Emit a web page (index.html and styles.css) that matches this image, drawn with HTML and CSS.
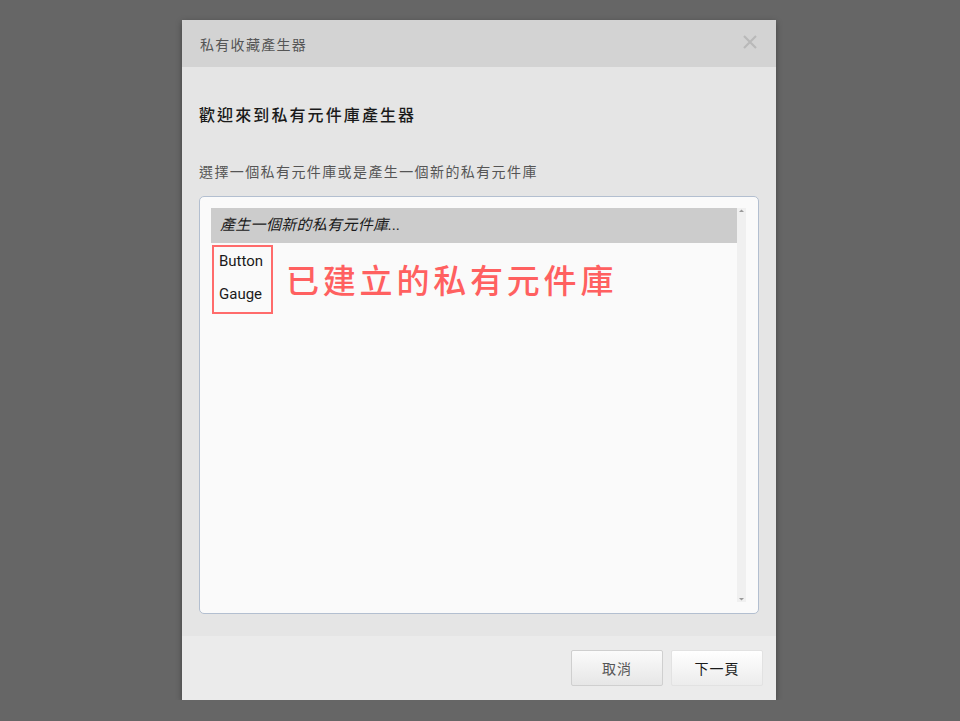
FILE: index.html
```html
<!DOCTYPE html>
<html lang="zh-Hant">
<head>
<meta charset="utf-8">
<title>私有收藏產生器</title>
<link rel="stylesheet" href="styles.css">
</head>
<body>
<div class="dialog">
  <div class="header">
    <span class="title">私有收藏產生器</span>
    <svg class="close" width="16" height="16" viewBox="0 0 16 16"><path d="M2 2L14 14M14 2L2 14" stroke="#b9b9b9" stroke-width="2.2" fill="none"/></svg>
  </div>
  <div class="body">
    <h1 class="heading">歡迎來到私有元件庫產生器</h1>
    <p class="sub">選擇一個私有元件庫或是產生一個新的私有元件庫</p>
    <div class="listbox">
      <div class="list">
        <div class="row new">產生一個新的私有元件庫...</div>
        <div class="existing">
          <div class="row item first">Button</div>
          <div class="row item second">Gauge</div>
        </div>
      </div>
      <div class="scrollbar">
        <svg width="9" height="6" viewBox="0 0 9 6"><path d="M2 4L4.5 1.5L7 4Z" fill="#9a9a9a"/></svg>
        <svg width="9" height="6" viewBox="0 0 9 6"><path d="M2 2L4.5 4.5L7 2Z" fill="#9a9a9a"/></svg>
      </div>
      <div class="note">已建立的私有元件庫</div>
    </div>
  </div>
  <div class="footer">
    <button class="btn cancel">取消</button>
    <button class="btn next">下一頁</button>
  </div>
</div>
</body>
</html>
```

FILE: styles.css
```css
html, body {
  margin: 0;
  padding: 0;
  background: #666666;
  font-family: Roboto, "Noto Sans CJK TC", sans-serif;
}
.dialog {
  width: 594px;
  margin: 20px 0 0 182px;
  background: #e5e5e5;
  box-shadow: 0 2px 6px rgba(0,0,0,0.35);
}
.header {
  height: 47px;
  background: #d3d3d3;
  display: flex;
  align-items: center;
  justify-content: space-between;
  padding: 0 18px 0 18px;
  box-sizing: border-box;
}
.title {
  font-size: 14px;
  color: #555555;
  letter-spacing: 1.3px;
}
.close { margin-top: -4px; }
.body {
  padding: 38px 17px 22px 17px;
}
.heading {
  margin: 0;
  font-size: 16px;
  font-weight: 500;
  color: #1a1a1a;
  line-height: 22px;
  letter-spacing: 2.1px;
}
.sub {
  margin: 34px 0 0 0;
  font-size: 14px;
  color: #555555;
  line-height: 22px;
  letter-spacing: 1.4px;
}
.listbox {
  position: relative;
  margin-top: 13px;
  height: 418px;
  box-sizing: border-box;
  border: 1px solid #b3bfd0;
  border-radius: 5px;
  background: #fafafa;
  padding: 11px 12px 11px 11px;
  display: flex;
}
.list {
  flex: 1;
}
.row {
  font-size: 15px;
  color: #1a1a1a;
}
.new {
  height: 35px;
  line-height: 35px;
  background: #cccccc;
  padding-left: 9px;
  font-style: italic;
  letter-spacing: 0.3px;
}
.existing {
  display: inline-block;
  margin: 2px 0 0 1px;
  border: 2px solid #ff6b6b;
  padding: 0 8px 0 5px;
}
.item.first { height: 32px; line-height: 28px; }
.item.second { height: 33px; line-height: 30px; }
.scrollbar {
  width: 9px;
  background: #f0f0f0;
  display: flex;
  flex-direction: column;
  justify-content: space-between;
}
.note {
  position: absolute;
  left: 86px;
  top: 58px;
  font-family: "Noto Sans CJK TC", sans-serif;
  font-size: 33px;
  letter-spacing: 3.8px;
  color: #ff6060;
  font-weight: 500;
}
.footer {
  height: 64px;
  background: #ebebeb;
  display: flex;
  justify-content: flex-end;
  align-items: flex-start;
  padding: 14px 13px 0 0;
  box-sizing: border-box;
  gap: 8px;
}
.btn {
  width: 92px;
  height: 36px;
  border: 1px solid #cfcfcf;
  border-radius: 2px;
  background: linear-gradient(#fbfbfb, #e6e6e6);
  font-family: "Noto Sans CJK TC", sans-serif;
  font-size: 14px;
  letter-spacing: 1px;
  color: #555555;
  padding: 0;
}
.btn.next {
  color: #1a1a1a;
  border-color: #e2e2e2;
  background: linear-gradient(#ffffff, #ececec);
}
```
